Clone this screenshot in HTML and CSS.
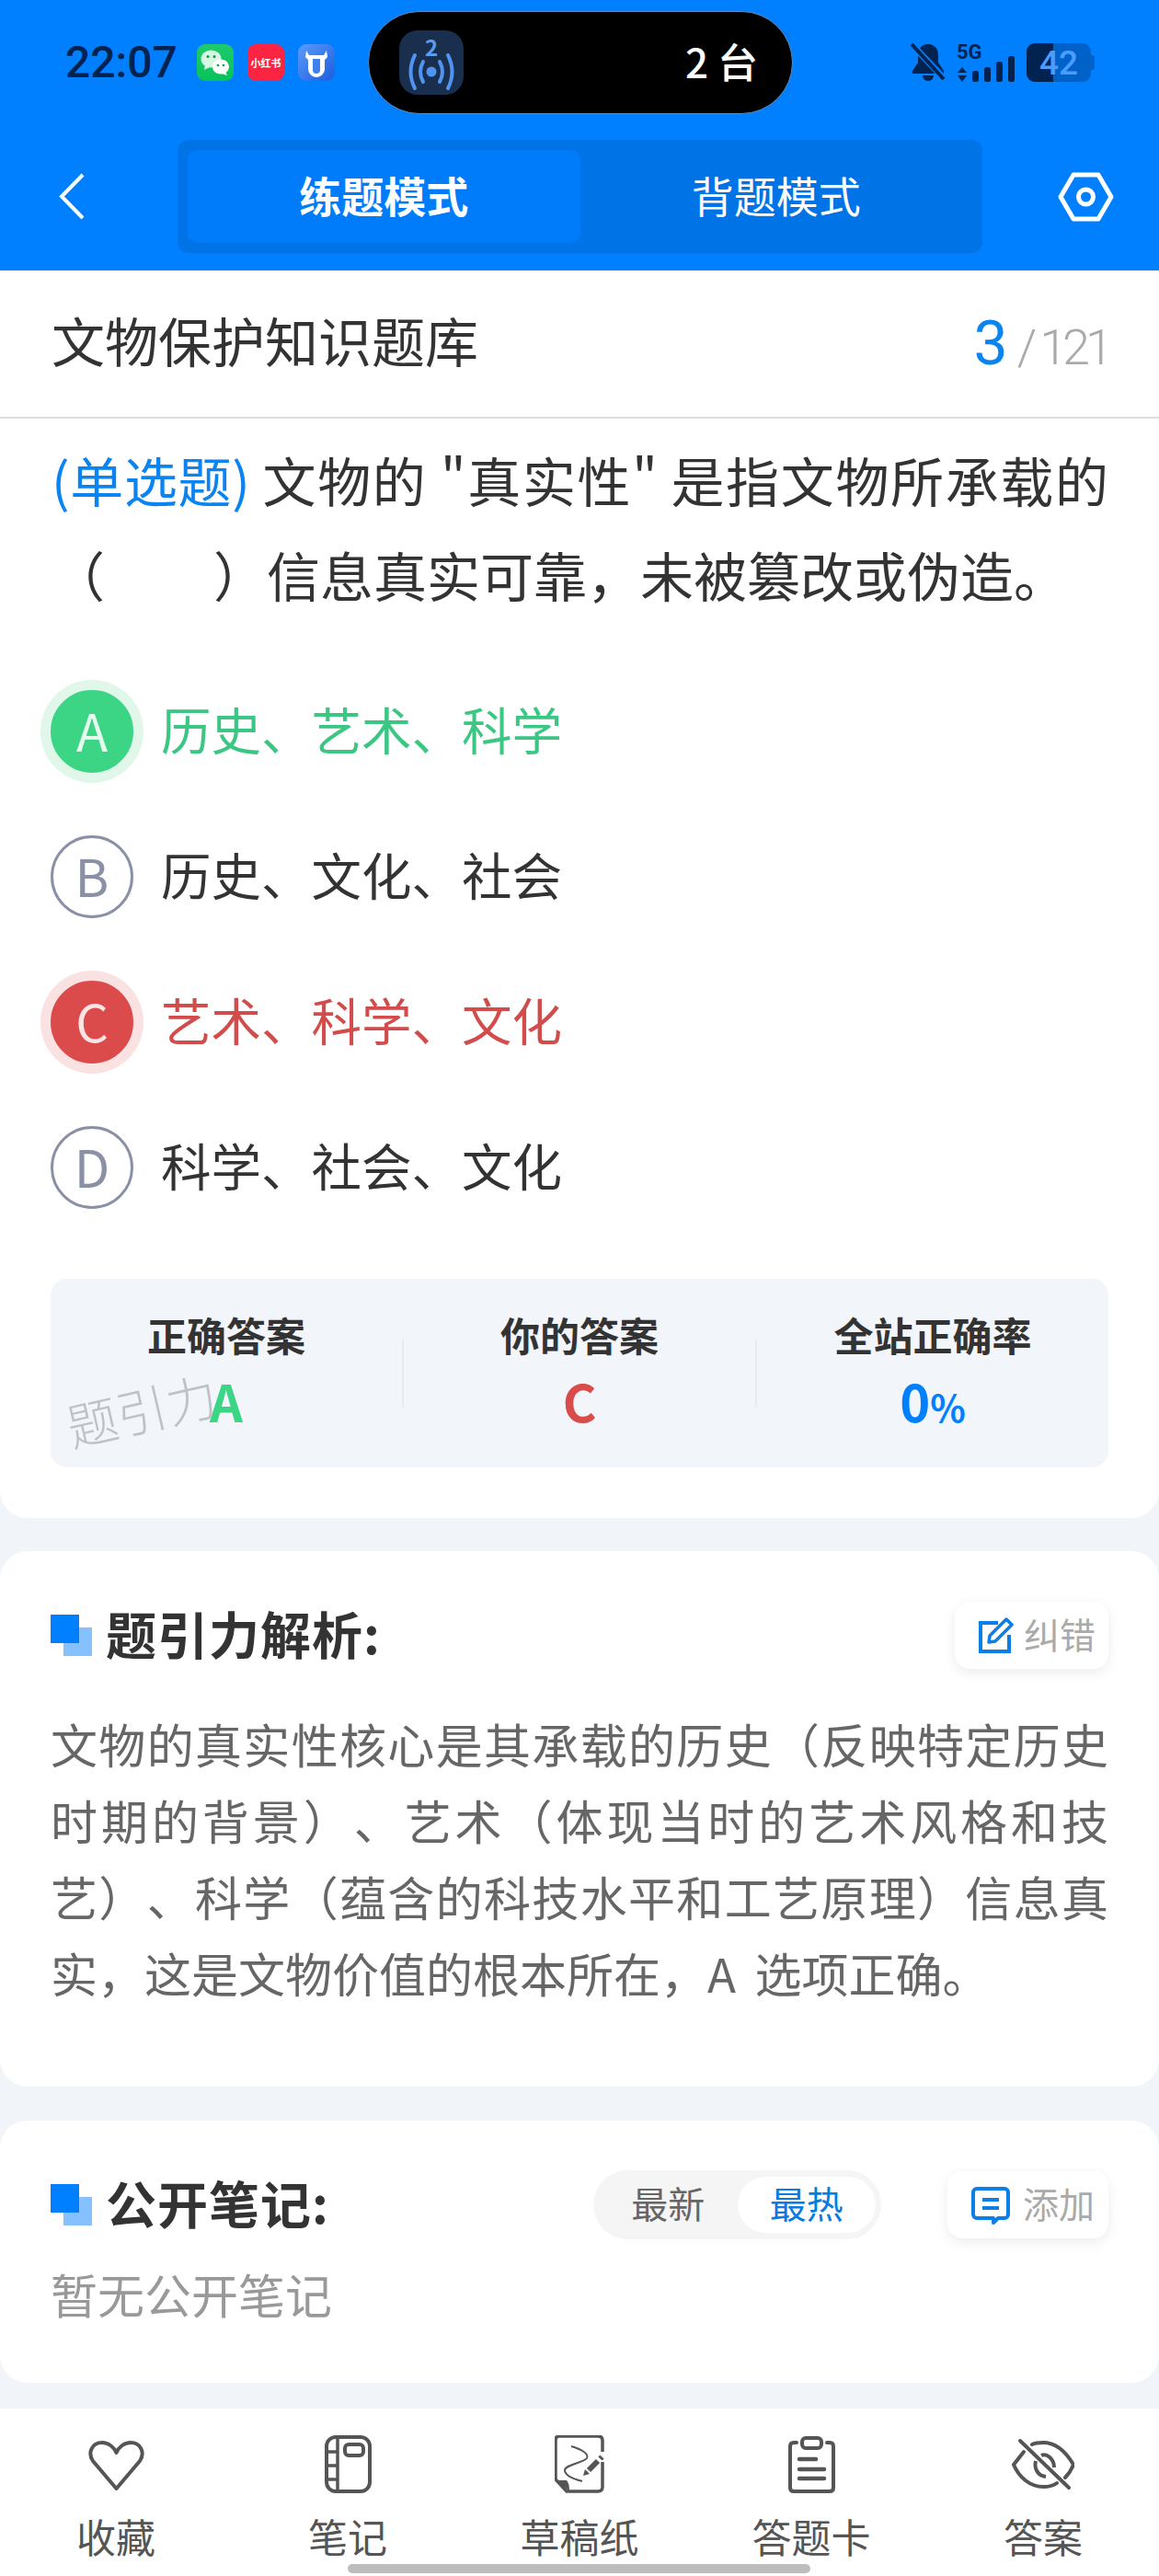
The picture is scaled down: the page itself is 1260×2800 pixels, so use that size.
FILE: index.html
```html
<!DOCTYPE html>
<html lang="zh-CN">
<head>
  <meta charset="UTF-8" />
  <meta name="viewport" content="width=device-width, initial-scale=1" />
  <title>文物保护知识题库</title>
  <link rel="stylesheet" href="styles.css">
</head>
<body>
  <div class="top">
    <div class="status">
      <span class="time">22:07</span>
      <svg class="app app-first" viewBox="0 0 40 40">
        <defs><linearGradient id="wx" x1="0" y1="0" x2="0" y2="1"><stop offset="0" stop-color="#1fc96c"/><stop offset="1" stop-color="#08c25a"/></linearGradient></defs>
        <rect width="40" height="40" rx="9" fill="url(#wx)"/>
        <ellipse cx="15.5" cy="16" rx="11" ry="9.5" fill="#d8f7e3"/>
        <path d="M9 22l-1 6 6-3z" fill="#d8f7e3"/>
        <ellipse cx="26" cy="24.5" rx="9" ry="8" fill="#fff"/>
        <path d="M31 30l2 4-6-2z" fill="#fff"/>
        <circle cx="12" cy="13.5" r="1.5" fill="#0a9d4c"/><circle cx="19" cy="13.5" r="1.5" fill="#0a9d4c"/>
        <circle cx="23" cy="23" r="1.3" fill="#0a9d4c"/><circle cx="29" cy="23" r="1.3" fill="#0a9d4c"/>
      </svg>
      <span class="app app-xhs">小红书</span>
      <svg class="app" viewBox="0 0 40 40">
        <defs><linearGradient id="nb" x1="0" y1="0" x2="1" y2="1"><stop offset="0" stop-color="#5a9bf8"/><stop offset="1" stop-color="#1c5ce0"/></linearGradient></defs>
        <rect width="40" height="40" rx="9" fill="url(#nb)"/>
        <path d="M9 7l3 5h16l3-5 1 7-3 3v10a9 9 0 0 1-18 0V17l-3-3z" fill="#fff"/>
        <path d="M16 16h8v12a4 4 0 0 1-8 0z" fill="#3f80ee"/>
      </svg>
      <div class="island">
        <svg class="island-icon" viewBox="0 0 70 70">
          <rect width="70" height="70" rx="20" fill="#1a2f4d"/>
          <text x="35" y="28" text-anchor="middle" class="island-num">2</text>
          <circle cx="35" cy="45" r="5.5" fill="#4f94f0"/>
          <path d="M26 34q-6 11 0 22M44 34q6 11 0 22M17 27q-9 18 0 36M53 27q9 18 0 36" fill="none" stroke="#4f94f0" stroke-width="4" stroke-linecap="round"/>
        </svg>
        <span class="island-text">2 台</span>
      </div>
      <svg class="bell" viewBox="0 0 38 41">
        <path d="M19 1c-7 0-11 5-11 12v8l-6 9v3h34v-3l-6-9v-8c0-7-4-12-11-12z" fill="#02234f"/>
        <path d="M13 35h12a6 6 0 0 1-12 0z" fill="#02234f"/>
        <path d="M3 3l33 35" stroke="#0080ff" stroke-width="7"/>
        <path d="M1 1l35 38" stroke="#02234f" stroke-width="4"/>
      </svg>
      <svg class="signal" viewBox="0 0 64 42">
        <text x="0" y="17" class="signal-text">5G</text>
        <path d="M6 26l5 6H1zM6 42l5-7H1z" fill="#02234f"/>
        <rect x="17" y="30" width="7" height="12" rx="2.5" fill="#02234f"/>
        <rect x="30" y="26" width="7" height="16" rx="2.5" fill="#02234f"/>
        <rect x="43" y="20" width="7" height="22" rx="2.5" fill="#02234f"/>
        <rect x="56" y="14" width="7" height="28" rx="2.5" fill="#02234f"/>
      </svg>
      <svg class="battery" viewBox="0 0 74 42">
        <rect width="70" height="42" rx="9" fill="#0062c8"/>
        <path d="M9 0h20v42H9a9 9 0 0 1-9-9V9a9 9 0 0 1 9-9z" fill="#02234f"/>
        <path d="M70 13h1a3 3 0 0 1 3 3v10a3 3 0 0 1-3 3h-1z" fill="#0062c8"/>
        <text x="35" y="34" text-anchor="middle" class="battery-text">42</text>
      </svg>
    </div>
    <div class="nav">
      <svg class="back" viewBox="0 0 28 51"><path d="M26 2L3 25.5 26 49" fill="none" stroke="#fff" stroke-width="4"/></svg>
      <div class="tabs">
        <div class="tab tab-active">练题模式</div>
        <div class="tab">背题模式</div>
      </div>
      <svg class="settings" viewBox="0 0 61 54">
        <path d="M17 3h27l14 24-14 24H17L3 27z" fill="none" stroke="#fff" stroke-width="5" stroke-linejoin="round"/>
        <circle cx="30.500" cy="27" r="8" fill="none" stroke="#fff" stroke-width="5"/>
      </svg>
    </div>
  </div>

  <div class="card card-question">
    <div class="title-row">
      <span class="title">文物保护知识题库</span>
      <span class="count"><b>3</b><i>/</i>121</span>
    </div>
    <div class="question">
      <span class="qline"><span class="qtype">(单选题)</span> 文物的 "真实性" 是指文物所承载的</span>
      （<span class="blank"></span>）信息真实可靠，未被篡改或伪造。
    </div>
    <div class="options">
      <div class="option correct"><span class="letter">A</span><span class="option-text">历史、艺术、科学</span></div>
      <div class="option"><span class="letter">B</span><span class="option-text">历史、文化、社会</span></div>
      <div class="option wrong"><span class="letter">C</span><span class="option-text">艺术、科学、文化</span></div>
      <div class="option"><span class="letter">D</span><span class="option-text">科学、社会、文化</span></div>
    </div>
    <div class="stats">
      <div class="stat">
        <div class="stat-label">正确答案</div>
        <div class="stat-value green">A</div>
      </div>
      <div class="stat-line"></div>
      <div class="stat">
        <div class="stat-label">你的答案</div>
        <div class="stat-value red">C</div>
      </div>
      <div class="stat-line"></div>
      <div class="stat">
        <div class="stat-label">全站正确率</div>
        <div class="stat-value blue">0<small>%</small></div>
      </div>
      <div class="watermark">题引力</div>
    </div>
  </div>

  <div class="card card-analysis">
    <div class="section-head">
      <div class="section-title">
        <svg class="mark" viewBox="0 0 45 45"><rect x="14" y="14" width="31" height="31" fill="#85c1ff"/><rect width="31" height="31" fill="#0080ff"/></svg>
        <span class="section-text">题引力解析:</span>
      </div>
      <div class="small-btn">
        <svg class="small-icon" viewBox="0 0 40 40">
          <path d="M22 6H3v31h31V19" fill="none" stroke="#0b7fe6" stroke-width="4"/>
          <path d="M13 20L31 2l6 6-18 18-7 1z" fill="none" stroke="#0b7fe6" stroke-width="3.5" stroke-linejoin="round"/>
        </svg>
        <span class="btn-text">纠错</span>
      </div>
    </div>
    <p class="analysis">
      <span class="line">文物的真实性核心是其承载的历史（反映特定历史</span>
      <span class="line">时期的背景）、艺术（体现当时的艺术风格和技</span>
      <span class="line">艺）、科学（蕴含的科技水平和工艺原理）信息真</span>
      <span class="line line-last">实，这是文物价值的根本所在，A 选项正确。</span>
    </p>
  </div>

  <div class="card card-notes">
    <div class="section-head section-head-notes">
      <div class="section-title">
        <svg class="mark" viewBox="0 0 45 45"><rect x="14" y="14" width="31" height="31" fill="#85c1ff"/><rect width="31" height="31" fill="#0080ff"/></svg>
        <span class="section-text">公开笔记:</span>
      </div>
      <div class="notes-tools">
        <div class="sort">
          <span class="sort-item">最新</span>
          <span class="sort-item sort-active">最热</span>
        </div>
        <div class="small-btn small-btn-wide">
          <svg class="small-icon" viewBox="0 0 42 42">
            <path d="M6 3h30a4 4 0 0 1 4 4v24a4 4 0 0 1-4 4h-7l-5 5v-5H6a4 4 0 0 1-4-4V7a4 4 0 0 1 4-4z" fill="none" stroke="#0b7fe6" stroke-width="4" stroke-linejoin="round"/>
            <path d="M12 15h18M12 24h18" stroke="#0b7fe6" stroke-width="4"/>
          </svg>
          <span class="btn-text">添加</span>
        </div>
      </div>
    </div>
    <div class="empty">暂无公开笔记</div>
  </div>

  <div class="bar">
    <div class="bar-item">
      <svg class="bar-icon" width="63" height="63" viewBox="0 0 63 63">
        <path d="M31.500 58L6 28C0 19 5 8 16 8c7 0 13 5 15.500 11C34 13 40 8 47 8c11 0 16 11 10 20z" fill="none" stroke="#555" stroke-width="4" stroke-linejoin="round"/>
      </svg>
      <span>收藏</span>
    </div>
    <div class="bar-item">
      <svg class="bar-icon" width="51" height="63" viewBox="0 0 51 63">
        <rect x="2" y="2" width="47" height="59" rx="10" fill="none" stroke="#555" stroke-width="4"/>
        <path d="M14 2v59M2 18h12M2 33h12M2 48h12" stroke="#555" stroke-width="3.5"/>
        <rect x="22" y="10" width="20" height="12" rx="4" fill="none" stroke="#555" stroke-width="4"/>
      </svg>
      <span>笔记</span>
    </div>
    <div class="bar-item">
      <svg class="bar-icon" width="55" height="63" viewBox="14 8 55 63">
        <path d="M66 26V14q0-5-5-5H19q-4 0-4 5v42l12 13h34q5 0 5-5V37" fill="none" stroke="#555" stroke-width="3.5"/>
        <path d="M16 57h11q3 3 3 12z" fill="#555"/>
        <path d="M32 20c10 3 20 8 17 13-4 5-24 7-24 13 0 6 11 10 19 12" fill="none" stroke="#555" stroke-width="2"/>
        <path d="M51 46l10-10" stroke="#555" stroke-width="6"/>
        <path d="M63.500 33.500l2-2" stroke="#555" stroke-width="6"/>
        <path d="M45 52l2-7 5 5z" fill="#555"/>
      </svg>
      <span>草稿纸</span>
    </div>
    <div class="bar-item">
      <svg class="bar-icon" width="55" height="63" viewBox="0 0 55 63">
        <path d="M11 8H8q-4 0-4 4v45q0 4 4 4h39q4 0 4-4V12q0-4-4-4h-3" fill="none" stroke="#555" stroke-width="4" stroke-linecap="round"/>
        <rect x="17" y="3" width="21" height="11" rx="4" fill="none" stroke="#555" stroke-width="4"/>
        <path d="M14 26h18M14 37h27M14 47h27" stroke="#555" stroke-width="4.500" stroke-linecap="round"/>
      </svg>
      <span>答题卡</span>
    </div>
    <div class="bar-item">
      <svg class="bar-icon" width="68" height="63" viewBox="0 0 68 63">
        <path d="M9 6l53 51" stroke="#555" stroke-width="4" stroke-linecap="round"/>
        <path d="M13 18L2 32c6 14 18 24 32 24 6 0 11-1 15-4M22 10c4-2 8-2 12-2 16 0 26 12 33 24-2 5-5 10-9 14" fill="none" stroke="#555" stroke-width="4" stroke-linecap="round"/>
        <path d="M26 28c-2 8 2 16 11 17M32 22c6-3 14 4 14 13" fill="none" stroke="#555" stroke-width="4"/>
      </svg>
      <span>答案</span>
    </div>
    <div class="home-bar"></div>
  </div>
</body>
</html>
```
FILE: styles.css
```css
* {
  box-sizing: border-box;
}

body {
  margin: 0;
  width: 1260px;
  height: 2800px;
  overflow: hidden;
  background: #f1f5f9;
  color: #333;
  font-family: "Noto Sans CJK SC", "Noto Sans", sans-serif;
  text-spacing-trim: space-all;
}

/* blue header */
.top {
  height: 294px;
  background: #0080ff;
  padding-top: 12px;
}

.status {
  display: flex;
  align-items: center;
  height: 111px;
  padding-left: 71px;
}

.time {
  width: 122px;
  font-family: Roboto, sans-serif;
  font-size: 48px;
  font-weight: 500;
  color: #02234f;
  white-space: nowrap;
}

.app {
  width: 40px;
  height: 40px;
  margin-left: 15px;
  flex: none;
}

.app-first {
  margin-left: 21px;
}

.app-xhs {
  display: flex;
  align-items: center;
  justify-content: center;
  border-radius: 9px;
  background: #fb2543;
  color: #fff;
  font-size: 11px;
  font-weight: 700;
  white-space: nowrap;
}

.island {
  display: flex;
  align-items: center;
  justify-content: space-between;
  width: 462px;
  height: 112px;
  margin-left: 36px;
  padding: 0 37px 0 33px;
  background: #000;
  border: 1px solid #5a8fc8;
  border-radius: 56px;
  flex: none;
}

.island-icon {
  width: 70px;
  height: 70px;
}

.island-num {
  font-size: 24px;
  font-weight: 700;
  fill: #5a9cf0;
}

.island-text {
  padding-bottom: 4px;
  color: #fff;
  font-size: 44px;
  font-weight: 500;
}

.bell {
  width: 38px;
  height: 41px;
  margin-left: 128px;
}

.signal {
  width: 64px;
  height: 42px;
  margin-left: 12px;
}

.signal-text {
  font-family: Roboto, sans-serif;
  font-size: 22px;
  font-weight: 700;
  fill: #02234f;
}

.battery {
  width: 74px;
  height: 42px;
  margin-left: 12px;
}

.battery-text {
  font-family: Roboto, sans-serif;
  font-size: 37px;
  font-weight: 500;
  fill: #4a9cff;
}

.nav {
  display: flex;
  align-items: center;
  margin-top: 29px;
  padding-left: 64px;
}

.back {
  width: 28px;
  height: 51px;
  margin-right: 101px;
}

.tabs {
  display: flex;
  width: 875px;
  height: 123px;
  padding: 11px;
  background: #0073e6;
  border-radius: 12px;
}

.tab {
  flex: 1;
  display: flex;
  align-items: center;
  justify-content: center;
  padding-bottom: 6px;
  color: #fff;
  font-size: 46px;
  border-radius: 10px;
}

.tab-active {
  background: #007bfa;
  font-weight: 700;
}

.settings {
  width: 61px;
  height: 54px;
  margin-left: 82px;
}

/* cards */
.card {
  background: #fff;
  border-radius: 30px;
}

.card-question {
  height: 1356px;
  border-radius: 0 0 30px 30px;
}

.title-row {
  display: flex;
  align-items: center;
  justify-content: space-between;
  height: 161px;
  padding: 0 55px 0 56px;
  border-bottom: 2px solid #ddd;
}

.title {
  padding-bottom: 10px;
  font-size: 58px;
}

.count {
  color: #aaa;
  font-family: Roboto, sans-serif;
  font-size: 54px;
  font-weight: 300;
  letter-spacing: -5px;
  white-space: nowrap;
}

.count b {
  color: #0a84f0;
  font-size: 66px;
  font-weight: 400;
  letter-spacing: 0;
}

.count i {
  margin: 0 8px 0 10px;
  font-style: normal;
}

.question {
  padding: 15px 55px 0 56px;
  font-size: 58px;
  line-height: 103px;
  white-space: nowrap;
}

.qline {
  display: block;
  text-align: justify;
  text-align-last: justify;
}

.qtype {
  color: #0a84f0;
  letter-spacing: -1px;
}

.blank {
  display: inline-block;
  width: 118px;
}

.options {
  margin-top: 40px;
  padding-left: 55px;
}

.option {
  display: flex;
  align-items: center;
  gap: 30px;
  height: 158px;
  font-size: 54.5px;
}

.option-text {
  padding-bottom: 7px;
}

.letter {
  display: flex;
  align-items: center;
  justify-content: center;
  width: 90px;
  height: 90px;
  padding-bottom: 5px;
  border: 3px solid #8a90a6;
  border-radius: 50%;
  color: #8a90a6;
  font-size: 56px;
  flex: none;
}

.correct {
  color: #3bc683;
}

.correct .letter {
  background: #3bd585;
  border-color: #3bd585;
  color: #e4fbee;
  box-shadow: 0 0 0 11px #e0f7ea;
}

.wrong {
  color: #d24c4c;
}

.wrong .letter {
  background: #dc4b4b;
  border-color: #dc4b4b;
  color: #fbe4e4;
  box-shadow: 0 0 0 11px #fae2e2;
}

.stats {
  position: relative;
  display: flex;
  height: 205px;
  margin: 42px 55px 0;
  padding-top: 38px;
  background: #f2f5f9;
  border-radius: 18px;
}

.stat {
  flex: 1;
  text-align: center;
}

.stat-line {
  width: 2px;
  height: 73px;
  margin-top: 28px;
  background: #e8eaee;
}

.stat-label {
  font-size: 43px;
  font-weight: 700;
  line-height: 44px;
}

.stat-value {
  margin-top: 20px;
  font-size: 56px;
  font-weight: 700;
  line-height: 60px;
}

.stat-value small {
  font-size: 40px;
}

.green {
  color: #3bd585;
}

.red {
  color: #d94c4c;
}

.blue {
  color: #0080ff;
}

.watermark {
  position: absolute;
  left: 16px;
  top: 108px;
  color: #bfc1c4;
  font-size: 55px;
  font-weight: 300;
  line-height: 66px;
  transform: rotate(-13deg);
}

.card-analysis {
  margin-top: 36px;
  height: 582px;
  padding: 55px 55px 0;
}

.card-notes {
  margin-top: 37px;
  height: 285px;
  padding: 54px 55px 0;
}

.section-head {
  display: flex;
  align-items: center;
  justify-content: space-between;
  height: 73px;
}

.section-head-notes {
  height: 75px;
}

.section-title {
  display: flex;
  align-items: center;
  gap: 15px;
  font-size: 55px;
  font-weight: 700;
}

.section-text {
  padding-bottom: 7px;
  letter-spacing: 1px;
}

.mark {
  width: 45px;
  height: 45px;
}

.small-btn {
  display: flex;
  align-items: center;
  gap: 10px;
  width: 167px;
  height: 73px;
  padding-left: 25px;
  background: #fff;
  border-radius: 16px;
  box-shadow: 0 4px 14px rgba(0, 0, 0, 0.08);
  color: #aaa;
  font-size: 39px;
  white-space: nowrap;
}

.btn-text {
  padding-bottom: 6px;
}

.small-btn-wide {
  gap: 14px;
  width: 175px;
  padding-left: 26px;
}

.small-icon {
  width: 40px;
  height: 40px;
  flex: none;
}

.small-btn-wide .small-icon {
  width: 42px;
  height: 42px;
}

.analysis {
  margin: 40px 0 0;
  color: #666;
  font-size: 51px;
  line-height: 83px;
}

.line {
  display: block;
  text-align: justify;
  text-align-last: justify;
  white-space: nowrap;
}

.line-last {
  text-align-last: left;
  word-spacing: 9px;
}

.notes-tools {
  display: flex;
  align-items: center;
  gap: 72px;
}

.sort {
  display: flex;
  width: 313px;
  height: 75px;
  padding: 7px 6px;
  background: #f5f5f5;
  border-radius: 38px;
  font-size: 40px;
}

.sort-item {
  flex: 1;
  display: flex;
  align-items: center;
  justify-content: center;
  padding-bottom: 6px;
  color: #666;
  border-radius: 31px;
}

.sort-active {
  background: #fff;
  color: #0a7be0;
}

.empty {
  margin-top: 24px;
  color: #999;
  font-size: 51px;
  line-height: 70px;
}

/* bottom bar */
.bar {
  position: relative;
  display: grid;
  grid-template-columns: repeat(5, 1fr);
  height: 182px;
  margin-top: 28px;
  padding-top: 29px;
  background: #fff;
}

.bar-item {
  display: flex;
  flex-direction: column;
  align-items: center;
  color: #555;
  font-size: 43px;
  line-height: 50px;
}

.bar-icon {
  margin-bottom: 21px;
}

.home-bar {
  position: absolute;
  left: 378px;
  bottom: 3px;
  width: 503px;
  height: 10px;
  background: #bdbdbd;
  border-radius: 5px;
}
```
